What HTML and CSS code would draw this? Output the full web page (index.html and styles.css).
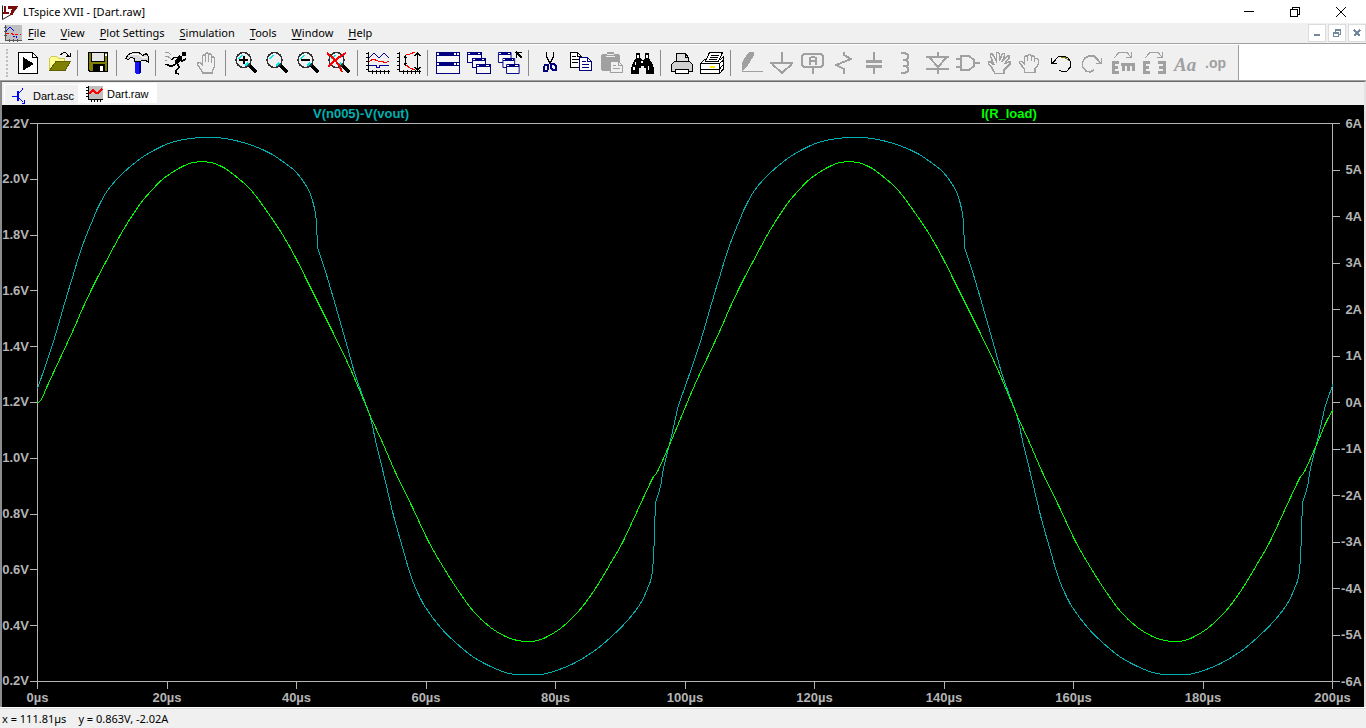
FILE: index.html
```html
<!DOCTYPE html>
<html lang="en">
<head>
<meta charset="utf-8">
<title>LTspice XVII - [Dart.raw]</title>
<link rel="stylesheet" href="styles.css">
<script src="plot.js" defer></script>
</head>
<body>
<div class="app">
  <header class="titlebar">
    <svg class="logo" viewBox="0 0 18 18"><path class="smooth" d="M1.5 2.500V16.500L11 11L16 4.500" fill="none" stroke="#222"/><path d="M3 3H5V9H8V11H2V9H3ZM7 3H17L16 6H14L12 12H9L11 6H7Z" fill="#7c0c0c"/></svg>
    <h1 class="title">LTspice XVII - [Dart.raw]</h1>
    <div class="caption">
      <button aria-label="Minimize"><svg viewBox="0 0 12 12"><path d="M1 5.500H11"/></svg></button>
      <button aria-label="Restore"><svg viewBox="0 0 12 12"><path d="M1.500 3.500H8.500V10.500H1.500ZM3.500 3V1.500H10.500V8.500H9"/></svg></button>
      <button aria-label="Close"><svg class="smooth" viewBox="0 0 12 12"><path d="M1 1L11 11M11 1L1 11"/></svg></button>
    </div>
  </header>

  <nav class="menubar">
    <svg class="doc-icon" viewBox="0 0 18 17"><path d="M2 0H18V16H2Z" fill="#c0c0c0"/><path d="M1.500 0V15.500H18M0 2.500H3M0 6.500H3M0 10.500H3M5.500 14V17M9.500 14V17M13.500 14V17" stroke="#555" fill="none"/><path d="M2 6L6 2L10 6" stroke="#00f" fill="none"/><path d="M9 11H12V14" stroke="#00f" fill="none" stroke-dasharray="2 1"/><path d="M2 8H7L10 10L13 9H17" stroke="red" fill="none" stroke-dasharray="3 2"/></svg>
    <button><u>F</u>ile</button><button><u>V</u>iew</button><button><u>P</u>lot Settings</button><button><u>S</u>imulation</button><button><u>T</u>ools</button><button><u>W</u>indow</button><button><u>H</u>elp</button>
    <div class="mdi">
      <button aria-label="Minimize document"><svg viewBox="0 0 10 10"><path d="M2 7H8" stroke-width="2"/></svg></button>
      <button aria-label="Restore document"><svg viewBox="0 0 10 10"><path d="M1.500 5.500H6.500V8.500H1.500ZM1 4.500H7M3.500 4V2.500H8.500V6.500H7M3 1.500H9"/></svg></button>
      <button aria-label="Close document"><svg viewBox="0 0 10 10"><path d="M2 2L8 8M8 2L2 8" stroke-width="2"/></svg></button>
    </div>
  </nav>

  <div class="toolbar-row">
    <div class="toolbar">
      <span class="grip"></span>
      <button aria-label="Run"><svg viewBox="0 0 24 24"><path d="M2.500 1.500H16.500L21.500 6.500V22.500H2.500Z" fill="#fff" stroke="#000"/><path d="M16.500 2V6.500H21" fill="none" stroke="#000"/><path d="M7 6L18 13L7 19.500Z"/></svg></button>
      <button aria-label="Open"><svg viewBox="0 0 24 24"><path d="M2.500 19V7.500L4.500 5.500H9.500L11.500 7.500H17.500V11H9L3 19Z" fill="#ffff90" stroke="#d2c850"/><path d="M9 10.500H23.500L18 19.500H2.500Z" fill="#808000" stroke="#606000"/><path d="M13.500 4L16.500 1.500H18.500L22 5.500M23 2V5.500H19" fill="none" stroke="#000"/></svg></button>
      <span class="sep"></span>
      <button aria-label="Save"><svg viewBox="0 0 24 24"><path d="M2.500 1.500H21.500V20.500H4L2.500 19Z" fill="#808000" stroke="#000"/><path d="M5.500 1.500H18.500V10.500H5.500Z" fill="#e6e6e6" stroke="#000"/><path d="M7 13H19V21H7Z"/><path d="M14 15H17V20H14Z" fill="#fff"/><path d="M19 3H21V5H19Z" fill="#fff"/></svg></button>
      <span class="sep"></span>
      <button aria-label="Control panel"><svg viewBox="0 0 24 24"><path d="M10 10H16V21L15 23H11L10 21Z" fill="#1414ff"/><path d="M14 10H16V22H14Z" fill="#000090"/><path d="M.500 7.500L3.500 3.500L8 1.500H14L17.500 4.500L21.500 2.500L23.500 6V11.500L21 9.500H17L15.500 10.500H9.500V7.500L6 6.500L3 8.500Z" fill="#d8d8d8" stroke="#000"/><path d="M4 4.500L8 3H13L17 6H22" fill="none" stroke="#fff"/></svg></button>
      <span class="sep"></span>
      <button aria-label="Run simulation"><svg viewBox="0 0 24 24"><path d="M18 1H22V5H18Z"/><path d="M17 5L12 12" stroke="#000" stroke-width="4"/><path d="M15 6.500H10L8 9M16 8L18 10L22 8M12 13L7 15.500L3 13.500H1M13 12L15 16L12 20V22L15 23" fill="none" stroke="#000" stroke-width="1.500"/><path d="M1 1.500H4L7 3.500M1 5.500H4L7 8M1 9H3" fill="none" stroke="#999"/></svg></button>
      <button aria-label="Halt"><svg class="off" viewBox="0 0 24 24"><path stroke-width="1.500" d="M7.500 22L6.500 19L2.500 14V12L4.500 11.500L7.500 14V4.500L9 3.500L10.500 4.500V11V2.500L12 1.500L13.500 2.500V11V3.500L15 2.500L16.500 3.500V12V6.500L18 5.500L19.500 6.500V16L17.500 19V22Z"/></svg></button>
      <span class="sep"></span>
      <button aria-label="Zoom in"><svg viewBox="0 0 24 24"><use href="#lens"/><path d="M5 9H14M9.500 5V13" stroke="#000" stroke-width="2"/></svg></button>
      <button aria-label="Zoom back"><svg viewBox="0 0 24 24"><g id="lens"><path d="M15 14L22.500 21.500" stroke="#000" stroke-width="4"/><circle cx="9.500" cy="9" r="7.500" fill="#f0f0f0" stroke="#333" stroke-width="1.500"/><path d="M5 8L8 4M11 15L14 12" fill="none" stroke="#00e8e8" stroke-width="1.500"/></g></svg></button>
      <button aria-label="Zoom out"><svg viewBox="0 0 24 24"><use href="#lens"/><path d="M5 9H14" stroke="#000" stroke-width="2"/></svg></button>
      <button aria-label="Zoom full"><svg viewBox="0 0 24 24"><use href="#lens"/><path d="M0 2L7 8L12 14L15 21M19 2L11 7L6 11L1 16" fill="none" stroke="red" stroke-width="2"/></svg></button>
      <span class="sep"></span>
      <button aria-label="Autorange"><svg viewBox="0 0 24 24"><path d="M2.500 1V20.500H24M0 2.500H2M0 6.500H2M0 10.500H2M0 14.500H2M0 18.500H2M6.500 19V23M10.500 19V23M14.500 19V23M18.500 19V23M22.500 19V23" fill="none" stroke="#000"/><path d="M3 7L8 2L13 7L18 2L23 7M3 14.500H10.500V16.500H13V14.500H23" fill="none" stroke="#00009c"/><path d="M3 11L7 8L12 10H16L19 12L23 10" fill="none" stroke="red"/></svg></button>
      <button aria-label="Plot limits"><svg viewBox="0 0 24 24"><path d="M2.500 1V20.500H24M0 2.500H2M0 6.500H2M0 10.500H2M0 14.500H2M0 18.500H2M6.500 19V23M10.500 19V23M14.500 19V23M18.500 19V23M22.500 19V23M8.500 5V14M7 7L8.500 5L10 7M7 12L8.500 14L10 12M20.500 2V19M17.500 5L20.500 2L23.500 5M17.500 16L20.500 19L23.500 16" fill="none" stroke="#000"/><path d="M9 4L13 3L18 1M9 14L13 17L18 19" fill="none" stroke="red"/></svg></button>
      <span class="sep"></span>
      <button aria-label="Tile windows"><svg viewBox="0 0 24 24"><path d="M.500 1.500H23.500V11.500H.500ZM.500 12.500H23.500V22.500H.500Z" fill="#f8f8f8" stroke="#000080"/><path d="M1 1H23V5H1ZM1 11H23V15H1Z" fill="#000080"/><path d="M1 2H3V4H1ZM18 2H20V4H18ZM21 2H23V4H21ZM1 12H3V14H1ZM18 12H20V14H18ZM21 12H23V14H21Z" fill="#fff"/></svg></button>
      <button aria-label="Cascade windows"><svg viewBox="0 0 24 24"><g id="cascade"><path d="M.500 1.500H14.500V11.500H.500Z" fill="#f8f8f8" stroke="#000080"/><path d="M1 1H14V4H1Z" fill="#000080"/><path d="M5.500 7.500H18.500V16.500H5.500Z" fill="#f8f8f8" stroke="#000080"/><path d="M6 7H18V10H6Z" fill="#000080"/><path d="M9.500 13.500H23.500V22.500H9.500Z" fill="#f8f8f8" stroke="#000080"/><path d="M10 13H23V16H10Z" fill="#000080"/><path d="M1 2H3V3H1ZM11 2H13V3H11ZM6 8H8V9H6ZM15 8H17V9H15ZM10 14H12V15H10ZM19 14H22V15H19Z" fill="#fff"/></g></svg></button>
      <button aria-label="Close all"><svg viewBox="0 0 24 24"><use href="#cascade" transform="scale(.9 1)"/><path d="M18.500 7V1.500H24M18 1L24 7" fill="none" stroke="#000" stroke-width="1.500"/></svg></button>
      <span class="sep"></span>
      <button aria-label="Cut"><svg viewBox="0 0 24 24"><path d="M9.500 1V6L13 12M16.500 1V6L13 12" fill="none" stroke="#000" stroke-width="1.500"/><path d="M12 10H14V13H12Z"/><path d="M8 14H11V18L10 20H7V16ZM14 13H17L19 15V19H16L14 17Z" fill="none" stroke="#000080" stroke-width="1.500"/></svg></button>
      <button aria-label="Copy"><svg viewBox="0 0 24 24"><path d="M2.500 1.500H9.500L13.500 5.500V16.500H2.500Z" fill="#fff" stroke="#000"/><path d="M9.500 2V5.500H13M4 5.500H8M4 8.500H11M4 11.500H10" fill="none" stroke="#000"/><path d="M11.500 6.500H19.500L23.500 10.500V19.500H11.500Z" fill="#fff" stroke="#000080"/><path d="M19.500 7V10.500H23M14 10.500H18M14 13.500H21M14 16.500H21" fill="none" stroke="#000080"/></svg></button>
      <button aria-label="Paste"><svg viewBox="0 0 24 24"><path d="M2 4L4 3H8V1H15V3H19L21 4V19L19 20H4L2 19Z" fill="#a0a0a0"/><path d="M7 5.500H16M8 3.500H15" stroke="#eee"/><path d="M11.500 10.500H19.500L23.500 14.500V21.500H11.500Z" fill="#f0f0f0" stroke="#a0a0a0"/><path d="M19.500 11V14.500H23M14 14.500H17M14 17.500H21" fill="none" stroke="#a0a0a0"/></svg></button>
      <button aria-label="Find"><svg viewBox="0 0 24 24"><path d="M6 2H10V7L12 9H14L15 7V2H19V7L22 12L24 17V23H16V17H14V15H11V17H9V23H1V17L3 12L6 7Z"/><path d="M7 4H9V7H7ZM16 4H18V7H16ZM5 11H6V14H5ZM3 16H5V19H3ZM11 10H13V12H11ZM18 15H19V19H18Z" fill="#fff"/></svg></button>
      <span class="sep"></span>
      <button aria-label="Print"><svg viewBox="0 0 24 24"><path d="M7.500 11V2.500H16.500L19.500 6.500V11" fill="#ddd" stroke="#000"/><path d="M16.500 2V6.500H20" fill="none" stroke="#000"/><path d="M5.500 10.500H20.500L23.500 13.500V20.500H2.500V13.500Z" fill="#d0d0d0" stroke="#000"/><path d="M6.500 18.500H19.500V22.500H6.500Z" fill="#fff" stroke="#000"/></svg></button>
      <button aria-label="Page setup"><svg viewBox="0 0 24 24"><path d="M.500 12.500L4.500 8.500H20.500L23.500 6V18L19.500 22.500H.500Z" fill="#fff" stroke="#000"/><path d="M.500 12.500H19.500V22M19.500 12.500L23.500 9M1 18.500H19L23 14" fill="none" stroke="#000"/><path d="M5.500 10.500L9.500 1.500H22.500L18.500 10.500Z" fill="#fff" stroke="#000"/><path d="M11 4.500H19M10 6.500H18M9 8.500H17" stroke="#000"/><path d="M10 15H15V17H10Z" fill="#ffec00"/></svg></button>
      <span class="sep"></span>
      <button aria-label="Draw wire"><svg viewBox="0 0 24 24"><path d="M8 3L11 1H15V4L8 16L3 20V12Z" fill="#a0a0a0"/><path d="M3 20.500H24" stroke="#a0a0a0"/></svg></button>
      <button aria-label="Ground"><svg class="off two" viewBox="0 0 24 24"><path d="M12 1V12M0 12H23M2 13L12 22L22 13"/></svg></button>
      <button aria-label="Label net"><svg class="off two" viewBox="0 0 24 24"><path d="M3 3H20L22 5V14L20 16H3L1 14V5ZM12 16V23M9 14V7L11 6H13L15 7V14M9 10H15"/></svg></button>
      <button aria-label="Resistor"><svg class="off two" viewBox="0 0 24 24"><path d="M12 1V4L19 8L4 14L12 18V23"/></svg></button>
      <button aria-label="Capacitor"><svg class="off" viewBox="0 0 24 24"><path stroke-width="2" d="M11 1V9M11 16V23"/><path stroke-width="3" d="M3 10.500H19M3 15.500H19"/></svg></button>
      <button aria-label="Inductor"><svg class="off two" viewBox="0 0 24 24"><path d="M7 2H11L14 4V7L12 9H9M9 9H12L14 11V14L12 15H9M9 15H12L14 17V20L11 22H7"/></svg></button>
      <button aria-label="Diode"><svg class="off two" viewBox="0 0 24 24"><path d="M1 6H24M1 18H24M13 1V6M13 17V23M4 6L13 16L22 6"/></svg></button>
      <button aria-label="Component"><svg class="off two" viewBox="0 0 24 24"><path d="M5 5H13L18 9V15L13 19H5ZM0 8H5M0 16H5M18 12H24"/></svg></button>
      <button aria-label="Move"><svg class="off" viewBox="0 0 24 24"><path stroke-width="1.500" d="M8 22.500L5 17L1.500 13V11H4L7 14L3.500 5V3H5.500L9.500 10V2L11 1.500L12.500 3V10L15.500 2.500H17.500V5L15 11L20.500 4.500H22V7L17.500 13L21.500 11H23V13L17 19V22.500Z"/></svg></button>
      <button aria-label="Drag"><svg class="off" viewBox="0 0 24 24"><path stroke-width="1.500" d="M6.500 21.500V18L1.500 12V10.500H4.500L6.500 13V6L8 4.500L9.500 6V10V5L11.500 3.500L13.500 5V10V5.500L15.500 4.500L16.500 6V11V7.500H19.500L20.500 9V13L17 18V21.500Z"/></svg></button>
      <button aria-label="Undo"><svg viewBox="0 0 24 24"><path d="M4 12L6 9L10 5H15L19 7L21.500 11V16L18 20L14 21L10 19" fill="none" stroke="#000"/><path d="M12 6H15L18 8L20 10" fill="none" stroke="#808000"/><path d="M2.500 7V12.500H8M3 12L7 9" fill="none" stroke="#000" stroke-width="1.500"/></svg></button>
      <button aria-label="Redo"><svg class="off" viewBox="0 0 24 24"><path stroke-width="1.500" d="M20 12L18 9L14 5H9L5 7L2.500 11V16L6 20L10 21L14 19M21.500 7V12.500H16M21 12L17 9"/></svg></button>
      <button aria-label="Rotate"><svg class="off" viewBox="0 0 24 24"><path d="M3 7L8 1.500H16L20 6M20.500 1V6.500H15"/><path stroke-width="3" d="M8 11.500H2.500V21.500H8M2 16.500H7M10 13.500H24M12 13V20M17.500 13V20M22.500 13V20"/></svg></button>
      <button aria-label="Mirror"><svg class="off" viewBox="0 0 24 24"><path d="M3 7L8 1.500H16L20 6M20.500 1V6.500H15"/><path stroke-width="3" d="M8 11.500H2.500V21.500H8M2 16.500H7M16 11.500H22.500V21.500H16M17 16.500H22"/></svg></button>
      <button aria-label="Text"><svg viewBox="0 0 24 24"><text class="glyph-serif" x="1" y="20">Aa</text></svg></button>
      <button aria-label="SPICE directive"><svg viewBox="0 0 24 24"><text class="glyph-op" x="1" y="17">.op</text></svg></button>
    </div>
  </div>

  <div class="workspace">
    <div class="tabs" role="tablist">
      <button class="tab" role="tab" aria-selected="false"><svg viewBox="0 0 18 16"><path d="M0 8H5M5.500 3V13M6 6L10 2V0M6 9L11 14M10 15H12V12" fill="none" stroke="#00f"/><path d="M5 3H7V13H5Z" fill="#00f"/></svg>Dart.asc</button>
      <button class="tab active" role="tab" aria-selected="true"><svg viewBox="0 0 18 16"><path d="M3 0H17V13H3Z" fill="#c0c0c0"/><path d="M2.500 0V13.500H17M0 1.500H2M0 4.500H2M0 7.500H2M0 10.500H2M5.500 14V16M8.500 14V16M11.500 14V16M14.500 14V16" stroke="#000" fill="none"/><path d="M3 8L7 4L10 7H12L16 3" fill="none" stroke="red" stroke-width="2"/></svg>Dart.raw</button>
    </div>

    <main class="chart">
      <div class="legend"><span class="trace-v">V(n005)-V(vout)</span><span class="trace-i">I(R_load)</span></div>
      <div class="axis-y left"><span>2.2V</span><span>2.0V</span><span>1.8V</span><span>1.6V</span><span>1.4V</span><span>1.2V</span><span>1.0V</span><span>0.8V</span><span>0.6V</span><span>0.4V</span><span>0.2V</span></div>
      <svg class="plot" viewBox="37 123 1296 559" preserveAspectRatio="none">
        <rect class="frame" x="37.500" y="123.500" width="1295" height="558"/>
        <g transform="translate(.5 .5)">
          <path id="voltage" class="line-v"/>
          <path id="current" class="line-i"/>
        </g>
      </svg>
      <div class="axis-y right"><span>6A</span><span>5A</span><span>4A</span><span>3A</span><span>2A</span><span>1A</span><span>0A</span><span>-1A</span><span>-2A</span><span>-3A</span><span>-4A</span><span>-5A</span><span>-6A</span></div>
      <div class="axis-x"><span>0µs</span><span>20µs</span><span>40µs</span><span>60µs</span><span>80µs</span><span>100µs</span><span>120µs</span><span>140µs</span><span>160µs</span><span>180µs</span><span>200µs</span></div>
    </main>
  </div>

  <footer class="status"><span>x = 111.81µs</span><span>y = 0.863V, -2.02A</span></footer>
</div>
</body>
</html>
```
FILE: plot.js
```js
// One period of each trace in plot units; the waveform repeats every PERIOD.
const PERIOD = 647;

const voltage = [
  [37, 388], [45, 365], [53, 341], [60, 317], [67, 293], [72, 277], [78, 257], [85, 237],
  [92, 220], [97, 208], [107, 190], [122, 173], [140, 158], [155, 149], [168, 143],
  [183, 139], [200, 137], [217, 137], [235, 140], [252, 145], [270, 153], [285, 163],
  [295, 171], [305, 184], [310, 194], [314, 208], [316, 222], [317, 245], [319, 253],
  [325, 271], [335, 305], [347, 347], [354, 372], [362, 395], [370, 417], [375, 440],
  [383, 473], [393, 515], [402, 547], [408, 568], [412, 580], [418, 594], [425, 607],
  [440, 627], [455, 642], [472, 656], [488, 665], [505, 672], [517, 674], [540, 674],
  [553, 671], [573, 663], [593, 651], [610, 637], [627, 620], [640, 603], [647, 588],
  [651, 577], [653, 557], [654, 530], [655, 505], [656, 499], [660, 486], [663, 468],
  [670, 440], [674, 422], [678, 405]
];

const current = [
  [47, 385], [60, 357], [73, 329], [83, 306], [95, 281], [105, 262], [123, 229],
  [140, 203], [152, 189], [163, 178], [180, 167], [193, 162], [210, 162], [223, 167],
  [233, 174], [250, 189], [268, 213], [282, 234], [295, 257], [312, 291], [330, 327],
  [347, 362], [360, 392], [370, 416], [382, 442], [395, 472], [412, 507], [428, 541],
  [440, 562], [455, 586], [473, 611], [490, 627], [505, 636], [517, 640], [531, 641],
  [543, 638], [560, 628], [577, 612], [593, 591], [610, 563], [622, 542], [637, 510],
  [652, 478], [657, 471], [670, 442], [678, 423]
];

const repeat = points => points.concat(points.map(([x, y]) => [x + PERIOD, y]));

// Catmull-Rom spline through the points, written as cubic segments.
function spline(points) {
  let d = `M${points[0]}`;
  for (let i = 0; i < points.length - 1; i++) {
    const p0 = points[Math.max(i - 1, 0)];
    const p1 = points[i];
    const p2 = points[i + 1];
    const p3 = points[Math.min(i + 2, points.length - 1)];
    const a = [p1[0] + (p2[0] - p0[0]) / 6, p1[1] + (p2[1] - p0[1]) / 6];
    const b = [p2[0] - (p3[0] - p1[0]) / 6, p2[1] - (p3[1] - p1[1]) / 6];
    d += `C${a} ${b} ${p2}`;
  }
  return d;
}

document.getElementById("voltage").setAttribute("d", spline([...repeat(voltage), [1331, 388], [1333, 382]]));
document.getElementById("current").setAttribute("d", spline([[37, 402], [39, 401], [42, 397], ...repeat(current), [1332, 410]]));
```
FILE: styles.css
```css
* { box-sizing: border-box; }
body { margin: 0; background: #f0f0f0; color: #000; font: 12px/16px "Noto Sans", "Open Sans", sans-serif; }
button { border: 0; padding: 0; margin: 0; background: none; color: inherit; font: inherit; }
svg { display: block; shape-rendering: crispEdges; }
.smooth { shape-rendering: auto; }

.app { display: flex; flex-direction: column; height: 100vh; }

.titlebar { display: flex; align-items: center; height: 23px; background: #fff; padding-left: 1px; font-size: 11px; }
.logo { width: 18px; height: 18px; margin-right: 4px; }
.title { margin: 0; font-size: inherit; font-weight: 400; }
.caption { display: flex; margin-left: auto; padding-right: 2px; }
.caption button { display: grid; place-items: center; width: 46px; height: 22px; }
.caption svg { width: 12px; height: 12px; fill: none; stroke: #000; }

.menubar { display: flex; align-items: center; gap: 1px; height: 20px; padding-left: 4px; font-size: 11px; }
.doc-icon { width: 18px; height: 17px; }
.menubar > button { padding: 0 7px; }
.menubar > .doc-icon + button { padding-left: 5px; }
.menubar u { text-underline-offset: 2px; }
.mdi { display: flex; gap: 2px; margin-left: auto; }
.mdi button { display: grid; place-items: center; width: 18px; height: 18px; background: #fff; border: 1px solid #dcdcdc; }
.mdi svg { width: 10px; height: 10px; fill: none; stroke: #74889c; }

.toolbar-row { display: flex; height: 38px; border-top: 1px solid #a0a0a0; border-bottom: 1px solid #a0a0a0; background: #fff; padding-top: 1px; }
.toolbar { display: flex; align-items: center; padding-right: 6px; background: #f0f0f0; border-right: 1px solid #a0a0a0; }
.grip { width: 8px; height: 28px; margin-right: 5px; border-right: 2px dotted #bdbdbd; }
.toolbar button { width: 31px; padding-left: 3px; }
.toolbar svg { width: 24px; height: 24px; overflow: visible; }
.sep { width: 8px; height: 26px; padding-left: 2px; }
.sep::before { content: ""; display: block; width: 1px; height: 26px; background: #8c8c8c; }
.off { fill: none; stroke: #a0a0a0; }
.two { stroke-width: 2; }
.glyph-serif { fill: #a0a0a0; font: italic bold 19px "Liberation Serif", serif; }
.glyph-op { fill: #a0a0a0; font: bold 14px "Liberation Sans", sans-serif; }

.workspace { flex: 1; min-height: 0; display: flex; flex-direction: column; border-top: 1px solid #696969; border-left: 2px solid #8c8c8c; border-right: 2px solid #e3e3e3; }
.tabs { display: flex; height: 23px; padding-left: 2px; }
.tab { display: flex; align-items: center; gap: 3px; height: 20px; margin-top: 2px; padding: 2px 4px 0 7px; border: 1px solid #fff; border-bottom: 0; font: 11px/16px "Liberation Sans", sans-serif; }
.tab svg { width: 18px; height: 16px; overflow: visible; }
.tab.active { margin-top: 1px; background: #fff; padding: 0 7px 0 6px; }

.chart { flex: 1; min-height: 0; display: grid; grid-template: 18px minmax(0, 1fr) 25px / 35px minmax(0, 1fr) 31px; background: #000; color: #b4b4b4; font: bold 13px/14px "Liberation Sans", sans-serif; }
.legend { grid-column: 2; display: grid; grid-template-columns: 1fr 1fr; text-align: center; padding-top: 2px; }
.trace-v { color: #00b0b0; }
.trace-i { color: #0f0; }
.plot { width: 100%; height: 100%; fill: none; }
.plot path, .plot rect { vector-effect: non-scaling-stroke; }
.frame { stroke: #b4b4b4; }
.line-v { stroke: #00b0b0; }
.line-i { stroke: #0f0; }
.axis-y { display: flex; flex-direction: column; justify-content: space-between; margin: -7px 0; }
.left { grid-column: 1; }
.axis-y span { display: flex; align-items: center; justify-content: flex-end; height: 15px; }
.left span::after { content: ""; width: 7px; height: 1px; margin-left: 1px; background: #b4b4b4; }
.axis-y.right span { justify-content: space-between; padding-right: 2px; }
.right span::before { content: ""; width: 7px; height: 1px; background: #b4b4b4; }
.axis-x { grid-column: 2; display: flex; justify-content: space-between; }
.axis-x span { display: flex; flex-direction: column; align-items: center; width: 1px; }
.axis-x span::before { content: ""; flex: none; width: 1px; height: 7px; margin-bottom: 2px; background: #b4b4b4; }

.status { display: flex; gap: 12px; height: 21px; padding: 3px 2px 0; border-top: 1px solid #fff; box-shadow: inset 0 1px #dcdcdc; font-size: 11px; line-height: 16px; }
```
